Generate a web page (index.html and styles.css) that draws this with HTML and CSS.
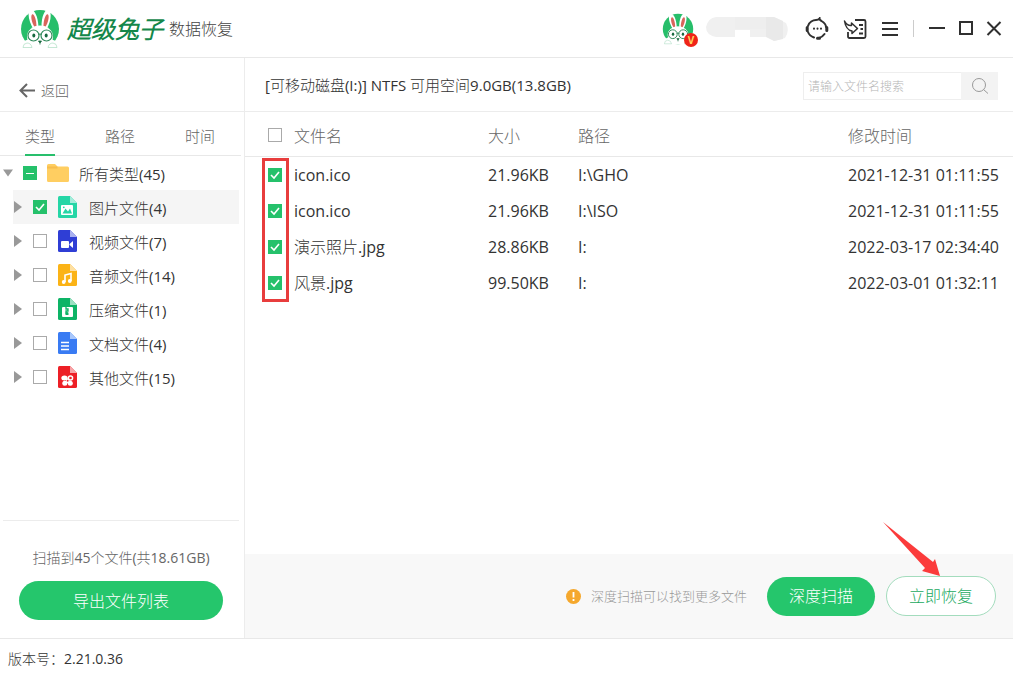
FILE: index.html
```html
<!DOCTYPE html>
<html lang="zh-CN">
<head>
<meta charset="utf-8">
<meta name="viewport" content="width=device-width, initial-scale=1">
<title>超级兔子数据恢复</title>
<link rel="stylesheet" href="styles.css">
</head>
<body>
<svg class="defs" width="0" height="0" aria-hidden="true">
  <symbol id="rabbit" viewBox="0 0 40 40">
    <circle cx="20" cy="20" r="19" fill="#27be6a"/>
    <path d="M3 36q1-6 8-6h18q7 0 8 6q0 3-3 3H6q-3 0-3-3z" fill="#fff"/>
    <path d="M14 21C9 13 7 4 10 1.500C13-1 18 5 18.500 18zM26 21C31 13 32 4 29 1.500C26-1 21.500 5 21.500 18z" fill="#fff"/>
    <path d="M14.500 18C11.500 13 10.500 7 12 5.500C14 4 16.500 11 16.500 17zM25.500 18C28.500 13 29.500 7 28 5.500C26 4 23.500 11 23.500 17z" fill="#d8655c"/>
    <ellipse cx="20" cy="27.500" rx="13" ry="11" fill="#fff"/>
    <g fill="#fff" stroke="#2f8a5a" stroke-width="1.200"><circle cx="13.500" cy="26.500" r="5.500"/><circle cx="26.500" cy="26.500" r="5.500"/><path d="M18.500 25.500q1.500-1 3 0" fill="none"/></g>
    <ellipse cx="13.800" cy="26.500" rx="1.500" ry="2" fill="#17693f"/><ellipse cx="26.200" cy="26.500" rx="1.500" ry="2" fill="#17693f"/>
    <path d="M18.500 32h3L20 34zM20 33.500v2" fill="#17693f" stroke="#17693f" stroke-width=".8"/>
    <path d="M3 38.500q0-4 4-4.500q4 0 5 4.500zM28 38.500q1-4.500 5-4.500q4 .5 4 4.500z" fill="#fff" stroke="#9fd8b9" stroke-width=".6"/>
  </symbol>
</svg>
<div class="app">
  <header class="topbar">
    <div class="brand">
      <svg class="logo"><use href="#rabbit"/></svg>
      <span class="brand-name">超级兔子</span>
      <span class="brand-product">数据恢复</span>
    </div>
    <div class="account">
      <div class="avatar">
        <svg class="avatar-image"><use href="#rabbit"/></svg>
        <span class="vip">V</span>
      </div>
      <svg class="user-mask" viewBox="0 0 82 26"><path d="M10 1H68L80 7Q84 15 79 22L68 25L63 21H10Q0 19 0 11Q2 2 10 1Z" fill="#f0f0f0"/><path d="M60 1h8l9 4v18l-9 2-8-4z" fill="#e9e9e9"/><path d="M29 14h15v7H29z" fill="#fff"/><path d="M29 1h31v12H29z" fill="#eee"/></svg>
    </div>
    <div class="tools">
      <button class="icon-button" aria-label="客服"><svg width="24" height="24" viewBox="0 0 24 24" fill="none" stroke="#303030" stroke-width="2" stroke-linecap="round"><path d="M3 9C4 5 8 3 11 3Q13.500 3 14.500 1.500Q14.500 3 16.500 4C19 5.500 21 7.500 21 10M19.500 17Q17.500 20 14 21M3 15Q4.500 19 9 20.500"/><path d="M2.200 10.500v3M21.800 10.500v3M12.500 21.200h2" stroke-width="3"/><path d="M9 11.500v.2M12.500 11.500v.2M16 11.500v.2"/></svg></button>
      <button class="icon-button" aria-label="导入"><svg width="24" height="24" viewBox="0 0 24 24" fill="none" stroke="#303030" stroke-width="1.800" stroke-linejoin="round"><path d="M12 3h9q1.500 0 1.500 1.500v15q0 1.500-1.500 1.500H6.500Q5 21 5 19.500V15"/><path d="M1.500 4Q4 9 8.500 8.500V6l6 5.500L9 16.500V14Q3 13 1.500 4z" stroke-width="1.500"/><path d="M16 8h4M17.500 12H20M16 16.500h4"/></svg></button>
      <button class="icon-button" aria-label="菜单"><svg width="18" height="16" viewBox="0 0 18 16" stroke="#303030" stroke-width="2"><path d="M1 2h16M1 8h16M1 14h16"/></svg></button>
      <span class="separator"></span>
      <div class="window-buttons">
        <button class="icon-button" aria-label="最小化"><svg width="18" height="16" viewBox="0 0 18 16" stroke="#303030" stroke-width="2"><path d="M1 7h16"/></svg></button>
        <button class="icon-button" aria-label="最大化"><svg width="16" height="16" viewBox="0 0 16 16" fill="none" stroke="#303030" stroke-width="2"><path d="M2 1h12v12H2z"/></svg></button>
        <button class="icon-button" aria-label="关闭"><svg width="16" height="16" viewBox="0 0 16 16" stroke="#303030" stroke-width="2"><path d="M1.500 1l13 13M14.500 1l-13 13"/></svg></button>
      </div>
    </div>
  </header>

  <div class="workspace">
    <aside class="sidebar">
      <button class="back"><svg width="18" height="16" viewBox="0 0 18 16" fill="none" stroke="#666" stroke-width="2"><path d="M9 1L2.500 7.500L9 14M2.500 7.500H17"/></svg>返回</button>
      <nav class="tabs">
        <button class="tab active">类型</button>
        <button class="tab">路径</button>
        <button class="tab">时间</button>
      </nav>
      <div class="tree">
        <div class="node root"><button class="caret open" aria-label="收起"></button><input class="check partial" type="checkbox" id="t0"><svg class="folder" viewBox="0 0 22 18"><path d="M1.500 0H8l2.500 2.500h10Q22 2.500 22 4v12.500Q22 18 20.500 18h-19Q0 18 0 16.500v-15Q0 0 1.500 0z" fill="#ffce61"/><path d="M0 2.500h10.500v2H0z" fill="#f7bd4d"/></svg><label for="t0">所有类型(45)</label></div>
        <div class="children">
          <div class="node selected"><button class="caret" aria-label="展开"></button><input class="check" type="checkbox" id="t1" checked><svg class="file" viewBox="0 0 19 22"><path d="M1.500 0H12l7 7v13.500Q19 22 17.500 22h-16Q0 22 0 20.500v-19Q0 0 1.500 0z" fill="#25d6a6"/><path d="M12 0l7 7h-7z" fill="#a4eddb"/><rect x="3" y="9" width="12" height="10" rx="1" fill="#fff"/><path d="M4.500 17.500l3-5 2.500 3 2-3 2 5z" fill="#25d6a6"/><circle cx="5.800" cy="11.300" r=".9" fill="#25d6a6"/></svg><label for="t1">图片文件(4)</label></div>
          <div class="node"><button class="caret" aria-label="展开"></button><input class="check" type="checkbox" id="t2"><svg class="file" viewBox="0 0 19 22"><path d="M1.500 0H12l7 7v13.500Q19 22 17.500 22h-16Q0 22 0 20.500v-19Q0 0 1.500 0z" fill="#2f3ed5"/><path d="M12 0l7 7h-7z" fill="#a9b1f0"/><rect x="3" y="11" width="8" height="7" rx="1" fill="#fff"/><path d="M11.500 14L15 11v7l-3.500-3z" fill="#fff"/></svg><label for="t2">视频文件(7)</label></div>
          <div class="node"><button class="caret" aria-label="展开"></button><input class="check" type="checkbox" id="t3"><svg class="file" viewBox="0 0 19 22"><path d="M1.500 0H12l7 7v13.500Q19 22 17.500 22h-16Q0 22 0 20.500v-19Q0 0 1.500 0z" fill="#fbb316"/><path d="M12 0l7 7h-7z" fill="#fee0a2"/><path d="M7 18v-7l6-1.500V17" fill="none" stroke="#fff" stroke-width="1.600"/><circle cx="5.700" cy="18" r="1.900" fill="#fff"/><circle cx="11.800" cy="17" r="1.900" fill="#fff"/></svg><label for="t3">音频文件(14)</label></div>
          <div class="node"><button class="caret" aria-label="展开"></button><input class="check" type="checkbox" id="t4"><svg class="file" viewBox="0 0 19 22"><path d="M1.500 0H12l7 7v13.500Q19 22 17.500 22h-16Q0 22 0 20.500v-19Q0 0 1.500 0z" fill="#0db466"/><path d="M12 0l7 7h-7z" fill="#9ce0c1"/><rect x="4" y="9" width="11" height="10" rx="1" fill="#fff"/><path d="M8 9v2h2v2H8v2h2" fill="none" stroke="#0db466" stroke-width="1.300"/><path d="M7.500 14.500h3V17h-3z" fill="#0db466"/></svg><label for="t4">压缩文件(1)</label></div>
          <div class="node"><button class="caret" aria-label="展开"></button><input class="check" type="checkbox" id="t5"><svg class="file" viewBox="0 0 19 22"><path d="M1.500 0H12l7 7v13.500Q19 22 17.500 22h-16Q0 22 0 20.500v-19Q0 0 1.500 0z" fill="#397bf3"/><path d="M12 0l7 7h-7z" fill="#a8c7fc"/><path d="M3 10.500h8M3 14h8M3 17.500h8" stroke="#fff" stroke-width="1.300"/></svg><label for="t5">文档文件(4)</label></div>
          <div class="node"><button class="caret" aria-label="展开"></button><input class="check" type="checkbox" id="t6"><svg class="file" viewBox="0 0 19 22"><path d="M1.500 0H12l7 7v13.500Q19 22 17.500 22h-16Q0 22 0 20.500v-19Q0 0 1.500 0z" fill="#ed1f26"/><path d="M12 0l7 7h-7z" fill="#f7a5a8"/><g fill="#fff"><ellipse cx="6.500" cy="12" rx="3.200" ry="2.500"/><circle cx="12.500" cy="12" r="2.800"/><circle cx="6.800" cy="17.300" r="2.500"/><circle cx="12.300" cy="17.300" r="2.500"/><path d="M8 12.500h3.500V17H8z"/></g><circle cx="9.600" cy="14.700" r="1" fill="#ed1f26"/><circle cx="12.500" cy="12" r="1.300" fill="#ed1f26"/></svg><label for="t6">其他文件(15)</label></div>
        </div>
      </div>
      <div class="summary">
        <p>扫描到45个文件(共18.61GB)</p>
        <button class="pill export">导出文件列表</button>
      </div>
    </aside>

    <main class="content">
      <div class="location">
        <h1>[可移动磁盘(I:)] NTFS 可用空间9.0GB(13.8GB)</h1>
        <form class="search">
          <input type="text" placeholder="请输入文件名搜索" aria-label="搜索文件名">
          <button type="button" aria-label="搜索"><svg width="18" height="18" viewBox="0 0 18 18" fill="none" stroke="#999"><circle cx="8" cy="8" r="6.500"/><path d="M12.500 12.500l4.500 4"/></svg></button>
        </form>
      </div>
      <div class="files">
        <table>
          <thead><tr><th class="c-check"><input class="check" type="checkbox" aria-label="全选"></th><th class="c-name">文件名</th><th class="c-size">大小</th><th>路径</th><th class="c-time">修改时间</th></tr></thead>
          <tbody>
            <tr><td class="c-check"><input class="check" type="checkbox" id="f1" checked></td><td><label for="f1">icon.ico</label></td><td>21.96KB</td><td>I:\GHO</td><td>2021-12-31 01:11:55</td></tr>
            <tr><td class="c-check"><input class="check" type="checkbox" id="f2" checked></td><td><label for="f2">icon.ico</label></td><td>21.96KB</td><td>I:\ISO</td><td>2021-12-31 01:11:55</td></tr>
            <tr><td class="c-check"><input class="check" type="checkbox" id="f3" checked></td><td><label for="f3">演示照片.jpg</label></td><td>28.86KB</td><td>I:</td><td>2022-03-17 02:34:40</td></tr>
            <tr><td class="c-check"><input class="check" type="checkbox" id="f4" checked></td><td><label for="f4">风景.jpg</label></td><td>99.50KB</td><td>I:</td><td>2022-03-01 01:32:11</td></tr>
          </tbody>
        </table>
        <div class="highlight"></div>
      </div>
      <div class="actions">
        <svg class="notice" width="15" height="15" viewBox="0 0 15 15"><circle cx="7.500" cy="7.500" r="7.500" fill="#f5a82d"/><path d="M7.500 3v5.500M7.500 10v2" stroke="#fff" stroke-width="1.800"/></svg>
        <span class="hint">深度扫描可以找到更多文件</span>
        <button class="pill scan">深度扫描</button>
        <button class="pill recover">立即恢复</button>
        <svg class="pointer" width="60" height="56" viewBox="0 0 60 56"><path d="M1 1L51 41L53 38L58 55L40 50L43 47z" fill="#fb3b3b"/></svg>
      </div>
    </main>
  </div>
  <footer class="status">版本号：2.21.0.36</footer>
</div>
</body>
</html>
```
FILE: styles.css
```css
* { box-sizing: border-box; }

body {
  margin: 0;
  background: #fff;
  color: #333;
  font-family: "Open Sans", "Noto Sans CJK SC Light", "Noto Sans CJK SC", sans-serif;
  font-size: 15px;
  font-weight: 400;
  line-height: 20px;
}

button, input { margin: 0; font: inherit; color: inherit; }
button { padding: 0; border: 0; background: none; cursor: pointer; }
svg { display: block; flex: none; }
.defs { position: absolute; }

.app { display: flex; flex-direction: column; min-height: 100vh; }

.topbar {
  display: flex;
  align-items: center;
  height: 58px;
  padding: 0 11px 0 20px;
  border-bottom: 1px solid #e8e8e8;
}
.brand { display: flex; align-items: center; flex: 1; }
.logo { width: 40px; height: 40px; }
.brand-name {
  margin-left: 7px;
  color: #14874a;
  font-size: 24px;
  font-style: italic;
  font-weight: 700;
  line-height: 32px;
}
.brand-product { margin-left: 6px; color: #444; font-size: 16px; }

.account { display: flex; align-items: center; gap: 12px; margin-right: 17px; }
.avatar { position: relative; }
.avatar-image { width: 32px; height: 32px; }
.vip {
  position: absolute;
  right: -4px;
  bottom: -2px;
  width: 14px;
  height: 14px;
  border-radius: 50%;
  background: #ef2418;
  color: #ffd45e;
  font-size: 10px;
  font-weight: 700;
  line-height: 14px;
  text-align: center;
}
.user-mask { width: 82px; height: 26px; }

.tools { display: flex; align-items: center; gap: 14px; }
.window-buttons { display: flex; align-items: center; gap: 12px; }
.separator { width: 1px; height: 17px; background: #ccc; }

.workspace { display: flex; flex: 1; }

.sidebar {
  display: flex;
  flex-direction: column;
  width: 245px;
  border-right: 1px solid #ececec;
}
.back {
  display: flex;
  align-items: center;
  gap: 5px;
  height: 54px;
  padding: 12px 18px 0;
  border-bottom: 1px solid #ececec;
  color: #666;
  font-size: 14px;
}
.tabs {
  display: flex;
  gap: 50px;
  height: 44px;
  margin-right: 3px;
  padding-left: 25px;
  border-bottom: 1px solid #e8e8e8;
  color: #666;
}
.tab { height: 44px; padding-top: 5px; border-bottom: 2px solid transparent; }
.tab.active { border-color: #28bf6c; }

.tree { flex: 1; padding-right: 5px; }
.node {
  display: flex;
  align-items: center;
  height: 34px;
}
.node label { padding-top: 1px; }
.root { padding-left: 3px; }
.children { margin-left: 13px; }
.selected { background: #f5f5f5; }
.caret {
  width: 10px;
  height: 12px;
  margin-right: 10px;
  background: #999;
  clip-path: polygon(10% 0, 90% 50%, 10% 100%);
}
.caret.open { clip-path: polygon(0 20%, 100% 20%, 50% 80%); }
.folder { width: 22px; height: 18px; margin: 0 10px; }
.file { width: 19px; height: 22px; margin: 0 12px 0 11px; }

.check {
  flex: none;
  display: block;
  width: 14px;
  height: 14px;
  appearance: none;
  border: 1px solid #aaa;
  background: #fff center / 14px 14px no-repeat;
  background-origin: border-box;
}
.check:checked {
  border-color: #25c16b;
  background-color: #25c16b;
  background-image: url("data:image/svg+xml,%3Csvg xmlns='http://www.w3.org/2000/svg' viewBox='0 0 14 14'%3E%3Cpath d='M3 7l3 3 5-6' fill='none' stroke='white' stroke-width='1.6'/%3E%3C/svg%3E");
}
.check.partial {
  border-color: #25c16b;
  background-color: #25c16b;
  background-image: url("data:image/svg+xml,%3Csvg xmlns='http://www.w3.org/2000/svg' viewBox='0 0 14 14'%3E%3Cpath d='M3 7.5h8' stroke='white'/%3E%3C/svg%3E");
}

.summary {
  margin: 0 5px 0 3px;
  padding: 27px 16px 18px;
  border-top: 1px solid #ececec;
  color: #666;
  font-size: 14px;
  text-align: center;
}
.summary p { margin: 0 0 13px; }

.pill {
  height: 39px;
  border-radius: 20px;
  background: #25c66c;
  color: #fff;
  font-size: 16px;
}
.export { width: 100%; }

.content { display: flex; flex: 1; flex-direction: column; min-width: 0; }
.location {
  display: flex;
  align-items: center;
  justify-content: space-between;
  height: 54px;
  padding: 0 15px 0 20px;
  border-bottom: 1px solid #ececec;
}
.location h1 { margin: 0; font-size: 15px; font-weight: inherit; }
.search { display: flex; width: 195px; height: 28px; margin-top: 2px; }
.search input {
  flex: 1;
  min-width: 0;
  padding: 2px 4px 0;
  border: 1px solid #eee;
  border-right: 0;
  outline: 0;
  font-size: 12px;
}
.search input::placeholder { color: #b5b5b5; }
.search button { display: grid; place-items: center; width: 37px; background: #f3f3f3; }

.files { position: relative; flex: 1; }
table { width: 100%; border-collapse: collapse; table-layout: fixed; font-size: 16px; }
th, td { height: 36px; padding: 1px 0 0; font-weight: inherit; text-align: left; }
th { height: 44px; padding-top: 5px; border-bottom: 1px solid #e8e8e8; color: #666; }
.c-check { width: 49px; padding: 2px 0 0 23px; }
.c-name { width: 194px; }
.c-size { width: 90px; }
.c-time { width: 165px; }
.highlight {
  position: absolute;
  top: 46px;
  left: 17px;
  width: 27px;
  height: 144px;
  border: 3px solid #e83d3d;
  pointer-events: none;
}

.actions {
  position: relative;
  display: flex;
  align-items: center;
  justify-content: flex-end;
  height: 84px;
  padding-right: 17px;
  background: #f8f8f8;
}
.hint { margin: 0 20px 0 10px; color: #999; font-size: 13px; }
.scan { width: 108px; }
.recover {
  width: 110px;
  height: 40px;
  margin-left: 11px;
  border: 1px solid #a3dcbd;
  background: #fff;
  color: #22a960;
}
.pointer { position: absolute; top: -33px; right: 71px; }

.status {
  height: 37px;
  padding: 10px 8px;
  border-top: 1px solid #e8e8e8;
  font-size: 14px;
}
```
